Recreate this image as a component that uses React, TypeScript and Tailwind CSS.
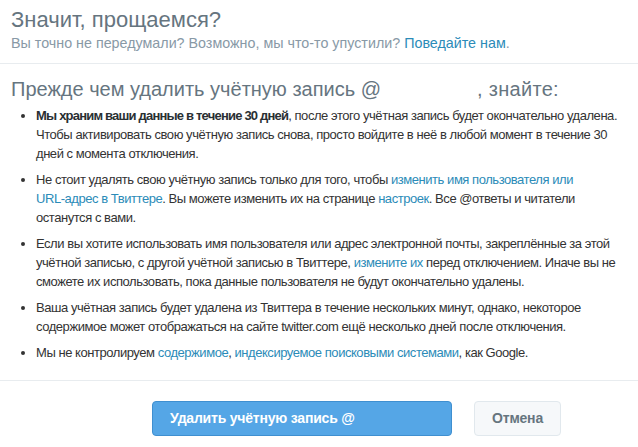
export default function App() {
  const link = "text-[#2b8bb8]";
  return (
    <div className="w-[638px] h-[447px] bg-white overflow-hidden text-[#333]" style={{ fontFamily: '"Liberation Sans", Arial, sans-serif' }}>
      <div className="px-[11px] pt-[6px] h-[64px] border-b border-[#e8ecef]">
        <div className="text-[22px] leading-[27px] text-[#66757f]">Значит, прощаемся?</div>
        <div className="text-[14.3px] leading-[18px] text-[#8899a6] mt-[1px]">
          Вы точно не передумали? Возможно, мы что-то упустили? <span className={link}>Поведайте нам</span>.
        </div>
      </div>
      <div className="h-[317px] border-b border-[#e8ecef] px-[11px] pt-[13px]">
        <div className="text-[20px] leading-[24px] text-[#66757f] flex">
          <span>Прежде чем удалить учётную запись @</span>
          <span className="w-[96px]"></span>
          <span className="tracking-[0.3px]">, знайте:</span>
        </div>
        <ul className="mt-[5px] pl-[25px] pr-[3px] text-[13px] leading-[19px] tracking-[-0.45px] list-disc marker:text-[#333]">
          <li className="mb-[7px]">
            <b className="tracking-[-0.8px] text-[#292f33]">Мы храним ваши данные в течение 30 дней</b>, после этого учётная запись будет окончательно удалена. Чтобы активировать свою учётную запись снова, просто войдите в неё в любой момент в течение 30 дней с момента отключения.
          </li>
          <li className="mb-[7px]">
            Не стоит удалять свою учётную запись только для того, чтобы <span className={link}>изменить имя пользователя или <span className="whitespace-nowrap">URL-адрес</span> в Твиттере</span>. Вы можете изменить их на странице <span className={link}>настроек</span>. Все @ответы и читатели останутся с вами.
          </li>
          <li className="mb-[7px]">
            Если вы хотите использовать имя пользователя или адрес электронной почты, закреплённые за этой учётной записью, с другой учётной записью в Твиттере, <span className={link}>измените их</span> перед отключением. Иначе вы не сможете их использовать, пока данные пользователя не будут окончательно удалены.
          </li>
          <li className="mb-[7px]">
            Ваша учётная запись будет удалена из Твиттера в течение нескольких минут, однако, некоторое содержимое может отображаться на сайте twitter.com ещё несколько дней после отключения.
          </li>
          <li>
            Мы не контролируем <span className={link}>содержимое</span>, <span className={link}>индексируемое поисковыми системами</span>, как Google.
          </li>
        </ul>
      </div>
      <div className="flex pl-[152px] pt-[20px] gap-[22px]">
        <button className="w-[300px] h-[35px] rounded-[4px] bg-[#55a6e6] border border-[#3f8fd0] text-white font-bold text-[14px] text-left pl-[17px] tracking-[-0.2px]">
          Удалить учётную запись @
        </button>
        <button className="w-[87px] h-[35px] rounded-[4px] bg-[#f6f8fa] border border-[#e1e8ed] text-[#66757f] font-bold text-[14px] tracking-[-0.2px]">
          Отмена
        </button>
      </div>
    </div>
  );
}
